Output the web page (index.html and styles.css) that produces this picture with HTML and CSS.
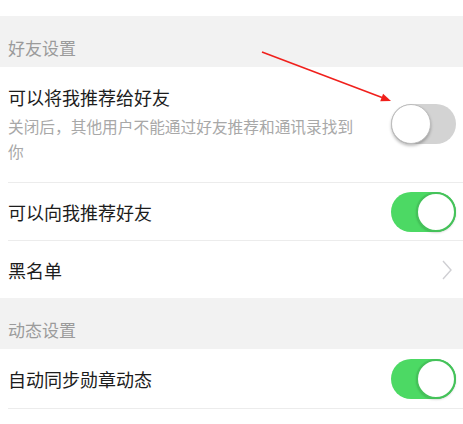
FILE: index.html
```html
<!DOCTYPE html>
<html lang="zh-CN">
<head>
  <meta charset="UTF-8">
  <meta name="viewport" content="width=device-width, initial-scale=1.0">
  <title>隐私设置</title>
  <link rel="stylesheet" href="styles.css">
</head>
<body>
  <div class="page">
    <div class="group-title">好友设置</div>
    <div class="list">
      <div class="cell cell-multi">
        <div class="cell-body">
          <div class="cell-title">可以将我推荐给好友</div>
          <div class="cell-desc">关闭后，其他用户不能通过好友推荐和通讯录找到你</div>
        </div>
        <span class="switch"><span class="knob"></span></span>
      </div>
      <div class="cell">
        <div class="cell-title">可以向我推荐好友</div>
        <span class="switch on"><span class="knob"></span></span>
      </div>
      <div class="cell cell-last">
        <div class="cell-title">黑名单</div>
        <svg class="chevron" width="10" height="20" viewBox="0 0 10 20">
          <polyline points="1,1 9,10 1,19" fill="none" stroke="#cfcfd3" stroke-width="1.4"/>
        </svg>
      </div>
    </div>

    <div class="group-title">动态设置</div>
    <div class="list">
      <div class="cell cell-tall">
        <div class="cell-title">自动同步勋章动态</div>
        <span class="switch on"><span class="knob"></span></span>
      </div>
    </div>

    <!-- annotation arrow pointing at the first switch -->
    <svg class="arrow" width="463" height="424" viewBox="0 0 463 424">
      <line x1="262" y1="52" x2="382" y2="97.5" stroke="#f0201c" stroke-width="1.6"/>
      <polygon points="391,101 380.2,101.2 383.1,93.7" fill="#f0201c"/>
    </svg>
  </div>
</body>
</html>
```

FILE: styles.css
```css
body {
  margin: 0;
  padding: 0;
  background: #ffffff;
  font-family: "Noto Sans CJK SC", "Noto Sans", sans-serif;
  color: #1c1c1c;
}

.page {
  position: relative;
  padding-top: 16px;
}

.group-title {
  background: #f2f2f2;
  color: #9b9b9b;
  font-size: 17px;
  line-height: 20px;
  padding: 22px 8px 9px;
}

.list {
  background: #ffffff;
}

.cell {
  display: flex;
  align-items: center;
  justify-content: space-between;
  min-height: 57px;
  margin-left: 8px;
  padding-right: 7px;
  border-bottom: 1px solid #ececec;
}

.cell-last {
  border-bottom: none;
}

.cell-tall {
  min-height: 59px;
}

.cell-multi {
  padding-top: 17px;
  padding-bottom: 18px;
}

.cell-body {
  width: 350px;
}

.cell-title {
  font-size: 18px;
  line-height: 26px;
}

.cell-desc {
  margin-top: 4px;
  font-size: 15.7px;
  line-height: 25px;
  color: #a8a8a8;
}

.switch {
  display: flex;
  justify-content: flex-start;
  align-items: center;
  width: 65px;
  height: 40px;
  border-radius: 20px;
  background: #d3d3d3;
  box-sizing: border-box;
}

.switch .knob {
  width: 38px;
  height: 38px;
  border-radius: 50%;
  background: #ffffff;
  border: 1px solid #bcbcbc;
  box-shadow: 0 2px 3px rgba(0, 0, 0, 0.25);
}

.switch.on {
  justify-content: flex-end;
  background: #4cd964;
}

.switch.on .knob {
  border: 2px solid #45c25a;
  width: 36px;
  height: 36px;
  box-shadow: 0 1px 2px rgba(0, 0, 0, 0.15);
}

.chevron {
  margin-right: 4px;
}

.arrow {
  position: absolute;
  left: 0;
  top: 0;
  pointer-events: none;
}
```
